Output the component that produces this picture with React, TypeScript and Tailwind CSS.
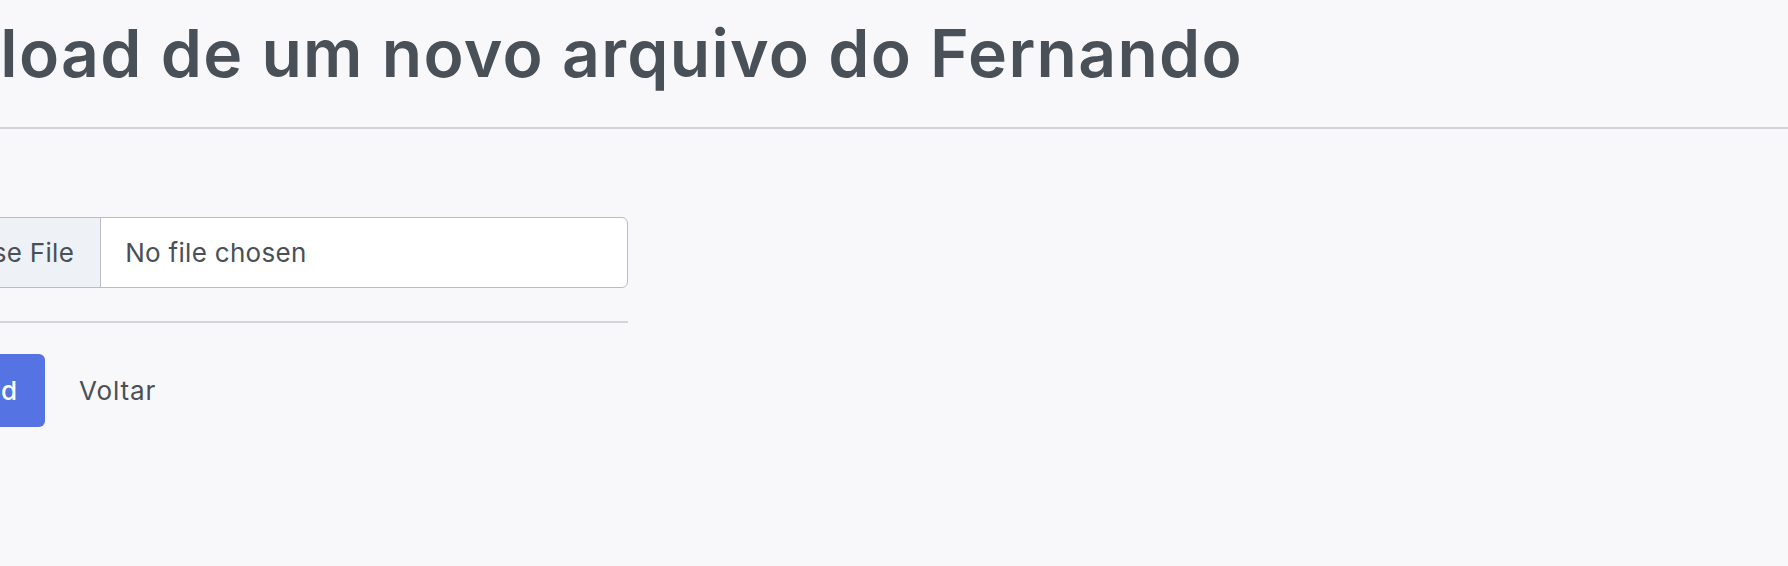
import React from "react";

export default function App() {
  return (
    <div className="w-[1788px] h-[566px] overflow-hidden bg-[#f8f8fa] text-[#495057]" style={{ fontFamily: "Inter, 'Noto Sans', sans-serif" }}>
      <div className="ml-[-92px] w-[1880px]">
        <div className="pt-[14px] pb-[34px] border-b-2 border-[#d3d3d7]">
          <h1 className="text-[66px] leading-[79px] font-semibold tracking-[1.3px] whitespace-nowrap">
            Upload de um novo arquivo do Fernando
          </h1>
        </div>
        <form className="w-[728px] ml-[-8px]">
          <div className="pt-[30px] pb-[19px]">
            <label className="block text-[26px] leading-[39px]">Arquivo</label>
          </div>
          <div className="flex h-[71px] border border-[#b9bec6] rounded-[6px] bg-white overflow-hidden text-[26px] tracking-[0.3px]">
            <div className="flex items-center pl-[25px] pr-[26px] bg-[#eef1f6] border-r border-[#b9bec6] whitespace-nowrap">
              Choose File
            </div>
            <div className="flex items-center pl-[24px] whitespace-nowrap">No file chosen</div>
          </div>
          <div className="mt-[33px] border-t-2 border-[#d5d5d9]" />
          <div className="flex items-center mt-[31px]">
            <button type="button" className="w-[145px] h-[73px] flex items-center justify-end pr-[26px] rounded-[6px] bg-[#5673e4] text-white text-[26px] font-medium tracking-[2px] whitespace-nowrap">
              Upload
            </button>
            <a className="ml-[34px] text-[26px] tracking-[0.9px]">Voltar</a>
          </div>
        </form>
      </div>
    </div>
  );
}
